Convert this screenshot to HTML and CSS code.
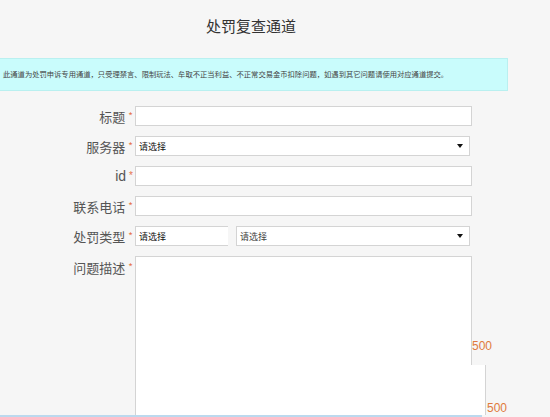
FILE: index.html
```html
<!DOCTYPE html>
<html lang="zh">
<head>
<meta charset="utf-8">
<title>处罚复查通道</title>
<link rel="stylesheet" href="styles.css">
</head>
<body>
<div class="page">
  <h1 class="title">处罚复查通道</h1>
  <div class="notice">此通道为处罚申诉专用通道，只受理禁言、限制玩法、牟取不正当利益、不正常交易金币扣除问题，如遇到其它问题请使用对应通道提交。</div>
  <div class="form">
    <div class="row">
      <span class="lbl">标题<span class="req">*</span></span>
      <div class="field input"></div>
    </div>
    <div class="row">
      <span class="lbl">服务器<span class="req">*</span></span>
      <div class="field select"><span>请选择</span><span class="arrow"></span></div>
    </div>
    <div class="row">
      <span class="lbl lbl-latin">id<span class="req">*</span></span>
      <div class="field input"></div>
    </div>
    <div class="row">
      <span class="lbl">联系电话<span class="req">*</span></span>
      <div class="field input"></div>
    </div>
    <div class="row">
      <span class="lbl">处罚类型<span class="req">*</span></span>
      <div class="type-pair">
        <div class="field select select-a"><span>请选择</span></div>
        <div class="field select select-b"><span class="faded">请选择</span><span class="arrow"></span></div>
      </div>
    </div>
    <div class="row row-desc">
      <span class="lbl">问题描述<span class="req">*</span></span>
      <div class="textarea"></div>
      <span class="count">500</span>
    </div>
    <div class="row row-extra">
      <span class="lbl"></span>
      <div class="textarea-extra"></div>
      <span class="count count-b">500</span>
    </div>
  </div>
  <div class="bottom-line"></div>
</div>
</body>
</html>
```

FILE: styles.css
```css
* { box-sizing: border-box; }
html, body {
  margin: 0;
  padding: 0;
  background: #f6f6f6;
}
body {
  font-family: "Liberation Sans", "Noto Sans CJK SC", sans-serif;
  color: #333;
  width: 550px;
  height: 417px;
  overflow: hidden;
}
.page {
  width: 550px;
  height: 417px;
  display: flex;
  flex-direction: column;
}
.title {
  width: 508px;
  margin: 0;
  padding: 16px 6px 0 0;
  height: 58px;
  font-size: 15px;
  line-height: 20px;
  font-weight: normal;
  text-align: center;
  color: #333;
  font-family: "Noto Sans CJK SC", sans-serif;
}
.notice {
  width: 508px;
  height: 33px;
  background: #c9fcfc;
  border: 1px solid #b9f0f0;
  border-left: none;
  padding-left: 3px;
  font-size: 7.3px;
  line-height: 31px;
  color: #444;
  white-space: nowrap;
  font-family: "Noto Sans CJK SC", sans-serif;
}
.form {
  display: flex;
  flex-direction: column;
  gap: 10px;
  padding-top: 15px;
}
.row {
  display: flex;
  align-items: center;
  height: 20px;
}
.lbl {
  width: 135px;
  flex: none;
  text-align: right;
  padding-right: 2px;
  font-size: 13px;
  color: #555;
  font-family: "Noto Sans CJK SC", sans-serif;
  line-height: 20px;
}
.lbl-latin {
  font-family: "Liberation Sans", sans-serif;
  font-size: 14px;
}
.req {
  color: #e6744c;
  font-size: 10px;
  margin-left: 3px;
  vertical-align: 2px;
}
.field {
  height: 20px;
  background: #fff;
  border: 1px solid #d4d4d4;
}
.input {
  width: 337px;
}
.select {
  width: 335px;
  display: flex;
  align-items: center;
  justify-content: space-between;
  padding: 0 6px 0 3px;
  font-size: 9px;
  color: #111;
  font-family: "Noto Sans CJK SC", sans-serif;
}
.arrow {
  width: 0;
  height: 0;
  border-left: 3px solid transparent;
  border-right: 3px solid transparent;
  border-top: 4px solid #111;
}
.type-pair {
  display: flex;
  gap: 8px;
}
.select-a {
  width: 93px;
  border-right: none;
}
.select-b {
  width: 234px;
}
.faded {
  color: #444;
}
.row-desc {
  height: 109px;
  align-items: stretch;
}
.row-desc .lbl {
  padding-top: 1px;
}
.textarea {
  width: 337px;
  background: #fff;
  border: 1px solid #d4d4d4;
  border-bottom: none;
}
.count {
  align-self: flex-end;
  margin-bottom: 12px;
  font-size: 12px;
  color: #e07a3c;
  font-family: "Liberation Sans", sans-serif;
  line-height: 14px;
}
.row-extra {
  margin-top: -10px;
  height: 50px;
  align-items: stretch;
}
.textarea-extra {
  width: 351px;
  background: #fff;
  border-left: 1px solid #d4d4d4;
  border-right: 1px solid #d4d4d4;
}
.count-b {
  margin-bottom: 0;
  margin-left: 1px;
}
.bottom-line {
  width: 482px;
  height: 2px;
  background: #bcd9ee;
}
```
